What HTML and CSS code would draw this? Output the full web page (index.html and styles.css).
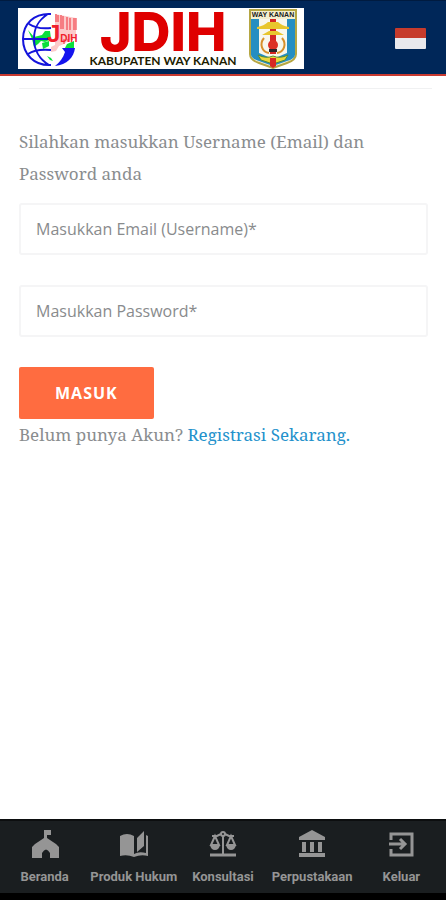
FILE: index.html
```html
<!DOCTYPE html>
<html lang="id">
<head>
  <meta charset="UTF-8">
  <meta name="viewport" content="width=device-width, initial-scale=1.0">
  <title>JDIH Kabupaten Way Kanan</title>
  <link rel="stylesheet" href="styles.css">
</head>
<body>
  <header class="topbar">
    <div class="brand">
      <!-- globe -->
      <svg class="globe" viewBox="0 0 58 58" fill="none" aria-hidden="true">
        <path d="M8 20l6 7 8-2 3-4 5 0 1 8-6 3-4-1-3 3-4 3-2-8zM22 33l7-2v5l-6 3zM27 46l4 2 2 3-3-1zM36 46l3 3M47 34l7-3v7h-9z" fill="#0be03c"/>
        <path d="M31 4C14 3 3 14 3 29s11 27 28 26M28 4C17 11 14 19 14 29s5 20 15 26M9 14c6 4 13 5 22 4M3 29h28M8 44c6-4 13-5 23-4" stroke="#1414dc" stroke-width="2"/>
        <path d="M42 38h13c-1 9-8 17-20 18 5-4 8-8 10-14z" fill="#1414ee"/>
        <path d="M35 4l21 4v18l-6 4-6 4-5 2-3 5-5 1v-5l4-2z" fill="#fccaca"/>
        <path d="M36 4v8M38 5v7M41 5v14M43 6v13M47 7v13M50 8v12M54 8v12M56 8v12M44 29v5M48 29v3M52 29v1" stroke="#f0303a" stroke-width="1"/>
        <text class="globe-text" x="27" y="32"><tspan class="globe-initial">J</tspan>DIH</text>
      </svg>
      <div class="brand-name">
        <span class="brand-title">JDIH</span>
        <span class="brand-sub">KABUPATEN WAY KANAN</span>
      </div>
      <!-- regency crest -->
      <svg class="crest" viewBox="0 0 50 60" aria-hidden="true">
        <path d="M2 1h46v44q0 6-9 9l-14 5-14-5q-9-3-9-9z" fill="#f4f0cf" stroke="#b5a642" stroke-width="2"/>
        <path d="M3 10h44v36q-1 4-8 6l-14 5-14-5q-7-2-8-6z" fill="#258ec2"/>
        <path d="M11 10h28v34l-14 6-14-6z" fill="#f8f7ed"/>
        <path d="M16 29c-5 6-2 14 5 15M34 29c5 6 2 14-5 15" fill="none" stroke="#d8902b" stroke-width="2"/>
        <path d="M22 10h6v35h-6z" fill="#d32624"/>
        <path d="M9 18q7-1 11-5h10q4 4 11 5v2H9zM14 26l7-4h8l7 4z" fill="#e8c62c"/>
        <circle cx="25" cy="36" r="5" fill="#dc3125"/>
        <path d="M21 40h8v3h-8z" fill="#29252b"/>
        <path d="M10 46q8 4 15 1 7 3 15-1l-3 5-12 4-12-4z" fill="#ead73b" stroke="#568b34"/>
        <path d="M22 49h6v8l-3 2-3-2z" fill="#d62822"/>
        <text class="crest-text" x="25" y="8" text-anchor="middle">WAY KANAN</text>
      </svg>
    </div>
    <button class="flag" type="button" aria-label="Bahasa Indonesia"></button>
  </header>

  <main class="content">
    <form class="login">
      <p class="intro">Silahkan masukkan Username (Email) dan Password anda</p>
      <input class="field" type="email" name="email" placeholder="Masukkan Email (Username)*" aria-label="Masukkan Email (Username)">
      <input class="field" type="password" name="password" placeholder="Masukkan Password*" aria-label="Masukkan Password">
      <button class="submit" type="submit">MASUK</button>
    </form>
    <p class="register">Belum punya Akun? <a href="#registrasi">Registrasi Sekarang.</a></p>
  </main>

  <nav class="tabs">
    <a class="tab" href="#beranda">
      <svg class="tab-icon" viewBox="0 0 28 28" fill="currentColor" aria-hidden="true">
        <path d="M13 0h7v5h-4v3l9 6 3 3v11h-9v-5q-4-7-8 0v5H1V17l3-3 9-6z"/>
      </svg>
      Beranda
    </a>
    <a class="tab" href="#produk">
      <svg class="tab-icon" viewBox="0 0 28 28" fill="currentColor" aria-hidden="true">
        <path d="M0 6q7-4 14 0v18q5-3 12-1V5l2 1v20q-7-2-14 1-7-3-14-1zM17 8l7-7v15l-7 6z"/>
      </svg>
      Produk Hukum
    </a>
    <a class="tab" href="#konsultasi">
      <svg class="tab-icon" viewBox="0 0 28 28" fill="none" stroke="currentColor" stroke-width="2" aria-hidden="true">
        <circle cx="14" cy="4" r="2"/>
        <path d="M3 6h5l4-2M25 6h-5l-4-2M14 6v18"/>
        <path d="M1 25h26" stroke-width="3"/>
        <path d="M6 6L2 15h8zM22 6l-4 9h8z"/>
        <path d="M1 15h10q-1 5-5 5t-5-5zM17 15h10q-1 5-5 5t-5-5z" fill="currentColor" stroke="none"/>
      </svg>
      Konsultasi
    </a>
    <a class="tab" href="#perpustakaan">
      <svg class="tab-icon" viewBox="0 0 28 28" fill="currentColor" aria-hidden="true">
        <path d="M14 0l13 7v3H1V7zM4 12h4v10H4zM12 12h4v10h-4zM20 12h4v10h-4zM1 23h26v4H1z"/>
      </svg>
      Perpustakaan
    </a>
    <a class="tab" href="#keluar">
      <svg class="tab-icon" viewBox="0 0 28 28" fill="none" stroke="currentColor" stroke-width="3" aria-hidden="true">
        <path d="M4 10V4h21v21H4v-6M2 14h16M13 9l5 5-5 5"/>
      </svg>
      Keluar
    </a>
  </nav>
</body>
</html>
```

FILE: styles.css
```css
* {
  box-sizing: border-box;
}

body {
  display: flex;
  flex-direction: column;
  min-height: 100vh;
  margin: 0;
  background-color: #fff;
  color: #8a8d8f;
  font-family: "Noto Serif", "DejaVu Serif", serif;
  font-size: 17px;
  line-height: 32px;
}

.topbar {
  display: flex;
  align-items: center;
  justify-content: space-between;
  padding: 7px 20px 5px 18px;
  background-color: #002759;
  border-top: 1px solid #001b40;
  border-bottom: 2px solid #c83a30;
}

.brand {
  display: flex;
  align-items: center;
  width: 286px;
  height: 61px;
  padding: 0 6px 0 2px;
  background-color: #fff;
}

.globe {
  width: 58px;
  height: 58px;
}

.globe-text {
  fill: #f0202c;
  font-family: "Liberation Sans", sans-serif;
  font-size: 10px;
  font-weight: 700;
}

.globe-initial {
  font-size: 24px;
}

.brand-name {
  flex: 1;
  display: flex;
  flex-direction: column;
  align-items: center;
  white-space: nowrap;
}

.brand-title {
  color: #df0000;
  font-family: Inter, sans-serif;
  font-size: 54px;
  font-weight: 800;
  line-height: 44px;
}

.brand-sub {
  color: #1c1c00;
  font-family: Lato, sans-serif;
  font-size: 12px;
  font-weight: 700;
  line-height: 14px;
}

.crest {
  width: 50px;
  height: 60px;
}

.crest-text {
  fill: #222;
  font-family: "Liberation Sans", sans-serif;
  font-size: 7px;
  font-weight: 700;
}

.flag {
  width: 31px;
  height: 21px;
  padding: 0;
  border: 0;
  border-radius: 1px;
  background: linear-gradient(#c63b2c 50%, #e9e9ed 50%);
  cursor: pointer;
}

.content {
  flex: 1;
  margin: 12px 14px 0 19px;
  padding-top: 37px;
  border-top: 1px solid #f0f1f2;
}

.login {
  margin-right: 4px;
}

.intro {
  margin: 0 0 13px;
}

.field {
  display: block;
  width: 100%;
  height: 52px;
  margin-bottom: 30px;
  padding: 0 15px;
  border: 2px solid #f5f5f6;
  border-radius: 3px;
  background-color: #fff;
  color: #777;
  font-family: "Open Sans", sans-serif;
  font-size: 16px;
}

.field::placeholder {
  color: #898b8d;
  opacity: 1;
}

.submit {
  display: block;
  height: 52px;
  padding: 0 36px;
  border: 0;
  border-radius: 2px;
  background-color: #ff6c40;
  color: #fff;
  font-family: "Open Sans", sans-serif;
  font-size: 16px;
  font-weight: 700;
  letter-spacing: 1px;
  cursor: pointer;
}

.register {
  margin: 0;
}

.register a {
  color: #2492cc;
  text-decoration: none;
}

.tabs {
  display: flex;
  justify-content: space-around;
  height: 81px;
  padding-top: 9px;
  background-color: #1a1e20;
  border-top: 2px solid #0c0e0f;
  border-bottom: 7px solid #000;
}

.tab {
  display: flex;
  flex-direction: column;
  align-items: center;
  gap: 11px;
  width: 88px;
  color: #959595;
  font-family: Roboto, sans-serif;
  font-size: 13px;
  font-weight: 700;
  line-height: 16px;
  text-decoration: none;
  white-space: nowrap;
}

.tab-icon {
  width: 28px;
  height: 28px;
}
```
